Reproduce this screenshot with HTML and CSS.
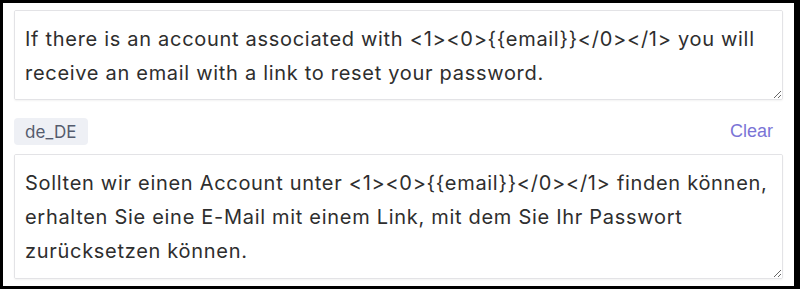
FILE: index.html
```html
<!DOCTYPE html>
<html lang="en">
<head>
<meta charset="utf-8">
<link rel="stylesheet" href="styles.css">
</head>
<body>
<div class="frame">
  <textarea class="field field-source">If there is an account associated with &lt;1&gt;&lt;0&gt;{{email}}&lt;/0&gt;&lt;/1&gt; you will receive an email with a link to reset your password.</textarea>
  <div class="row">
    <span class="tag">de_DE</span>
    <button class="clear" type="button">Clear</button>
  </div>
  <textarea class="field field-target">Sollten wir einen Account unter &lt;1&gt;&lt;0&gt;{{email}}&lt;/0&gt;&lt;/1&gt; finden können, erhalten Sie eine E-Mail mit einem Link, mit dem Sie Ihr Passwort zurücksetzen können.</textarea>
</div>
</body>
</html>
```
FILE: styles.css
```css
* { box-sizing: border-box; }
html, body { margin: 0; padding: 0; }
body {
  background: #000;
  width: 800px;
  height: 289px;
  padding: 3px 6px 3px 3px;
}
.frame {
  background: #fff;
  height: 283px;
  padding: 7px 11px 7px 11px;
  display: flex;
  flex-direction: column;
}
.field {
  display: block;
  width: 100%;
  margin: 0;
  border: 1px solid #e3e3e6;
  border-radius: 2px;
  box-shadow: 0 1px 2px rgba(0,0,0,0.05);
  font-family: Inter, "Noto Sans", sans-serif;
  font-size: 20px;
  letter-spacing: 0.7px;
  line-height: 34px;
  color: #2e2e2e;
  padding: 11px 10px;
  resize: vertical;
  outline: none;
  background: #fff;
}
.field-source { height: 90px; }
.field-target { height: 125px; }
.row {
  display: flex;
  align-items: center;
  justify-content: space-between;
  margin: 18px 0 9px;
  height: 27px;
}
.tag {
  display: inline-flex;
  align-items: center;
  height: 27px;
  padding: 0 11px;
  background: #eef0f5;
  border-radius: 4px;
  color: #545b6d;
  font-family: Inter, "Noto Sans", sans-serif;
  font-size: 17px;
  letter-spacing: 0.1px;
}
.clear {
  border: 0;
  background: none;
  padding: 0;
  margin-right: 10px;
  font-family: "Liberation Sans", Arial, sans-serif;
  font-size: 18px;
  color: #7a74d6;
  cursor: pointer;
}
```
